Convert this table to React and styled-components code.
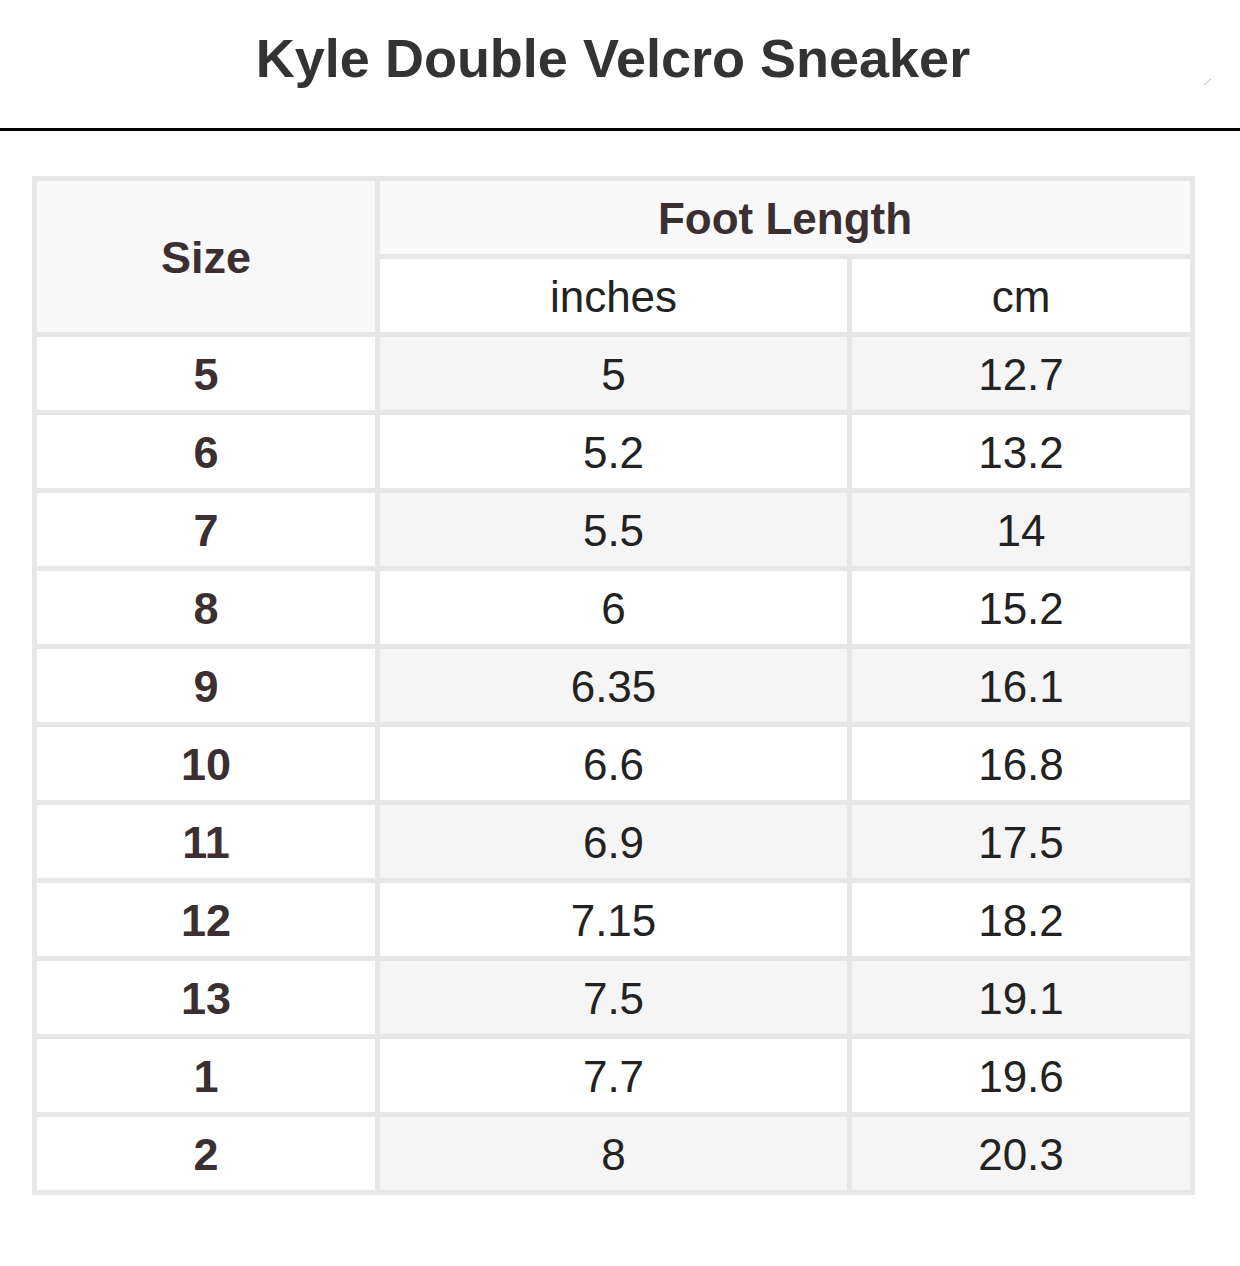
import React from 'react';
import styled, { createGlobalStyle } from 'styled-components';

const GlobalStyle = createGlobalStyle`
  html, body {
    margin: 0;
    padding: 0;
    background: #ffffff;
  }
  body {
    font-family: "Liberation Sans", Arial, Helvetica, sans-serif;
  }
`;

const rows = [
  ['5', '5', '12.7'],
  ['6', '5.2', '13.2'],
  ['7', '5.5', '14'],
  ['8', '6', '15.2'],
  ['9', '6.35', '16.1'],
  ['10', '6.6', '16.8'],
  ['11', '6.9', '17.5'],
  ['12', '7.15', '18.2'],
  ['13', '7.5', '19.1'],
  ['1', '7.7', '19.6'],
  ['2', '8', '20.3'],
];

const Page = styled.div`
  width: 1240px;
  min-height: 1266px;
  background: #fff;
`;

const Header = styled.header`
  position: relative;
  height: 131px;
  box-sizing: border-box;
  padding: 28px 14px 0 0;
  border-bottom: 3px solid #000;
  text-align: center;
`;

const Title = styled.h1`
  margin: 0;
  font-size: 54px;
  line-height: 61px;
  font-weight: 700;
  color: #333333;
`;

const Mark = styled.svg`
  position: absolute;
  right: 26px;
  top: 77px;
`;

const Content = styled.main`
  padding: 45px 0 0 32px;
`;

const Grid = styled.div`
  display: grid;
  width: 1163px;
  box-sizing: border-box;
  grid-template-columns: 338px 467px 1fr;
  grid-auto-rows: 73px;
  gap: 5px;
  padding: 5px;
  background: #e7e7e9;
`;

const Cell = styled.div`
  display: flex;
  align-items: center;
  justify-content: center;
  padding-top: 3px;
  box-sizing: border-box;
  background: ${(p) => p.$bg || '#ffffff'};
  color: ${(p) => (p.$bold ? '#3b2f31' : '#222222')};
  font-weight: ${(p) => (p.$bold ? 700 : 400)};
  font-size: ${(p) => p.$size || 44}px;
  grid-row: ${(p) => (p.$rowSpan ? `span ${p.$rowSpan}` : 'auto')};
  grid-column: ${(p) => (p.$colSpan ? `span ${p.$colSpan}` : 'auto')};
`;

export default function App() {
  return (
    <Page>
      <GlobalStyle />
      <Header>
        <Title>Kyle Double Velcro Sneaker</Title>
        <Mark width="12" height="10" viewBox="0 0 12 10">
          <line x1="2" y1="8" x2="9" y2="2" stroke="#b5b5b5" strokeWidth="1" />
        </Mark>
      </Header>
      <Content>
        <Grid>
          <Cell $bold $size={45} $bg="#f9f9fa" $rowSpan={2}>Size</Cell>
          <Cell $bold $size={44} $bg="#f9f9fa" $colSpan={2}>Foot Length</Cell>
          <Cell>inches</Cell>
          <Cell>cm</Cell>
          {rows.map((r, i) => {
            const bg = i % 2 === 0 ? '#f5f5f5' : '#ffffff';
            return (
              <React.Fragment key={r[0]}>
                <Cell $bold $size={45}>{r[0]}</Cell>
                <Cell $bg={bg}>{r[1]}</Cell>
                <Cell $bg={bg}>{r[2]}</Cell>
              </React.Fragment>
            );
          })}
        </Grid>
      </Content>
    </Page>
  );
}
